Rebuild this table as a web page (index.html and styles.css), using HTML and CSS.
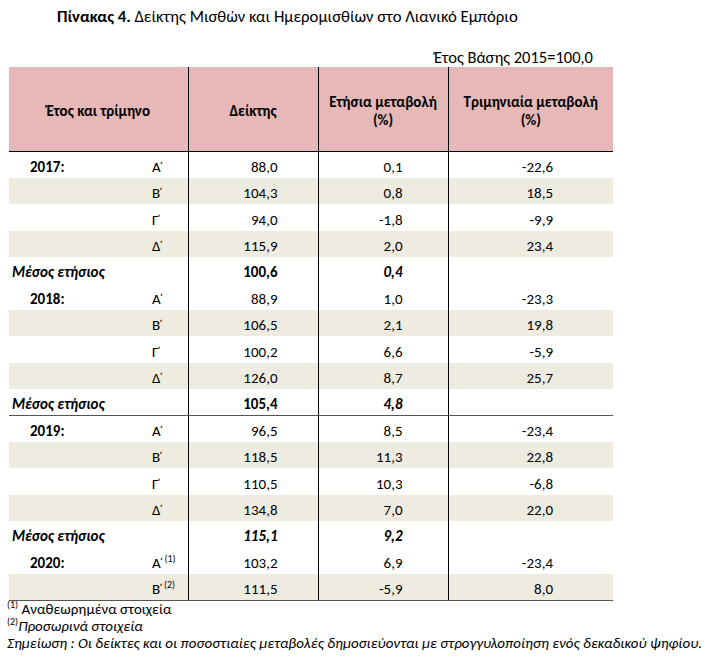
FILE: index.html
```html
<!DOCTYPE html>
<html lang="el">
<head>
    <meta charset="UTF-8">
    <title>Πίνακας 4</title>
    <link rel="stylesheet" href="styles.css">
</head>
<body>
    <div class="page">
        <div class="title"><b>Πίνακας 4.</b> Δείκτης Μισθών και Ημερομισθίων στο Λιανικό Εμπόριο</div>
        <div class="base">Έτος Βάσης 2015=100,0</div>
        <table class="data">
            <colgroup>
                <col class="w-year">
                <col class="w-q">
                <col class="w-num">
                <col class="w-num">
                <col class="w-last">
            </colgroup>
            <thead>
                <tr>
                    <th colspan="2">Έτος και τρίμηνο</th>
                    <th class="c2">Δείκτης</th>
                    <th class="c3">Ετήσια μεταβολή<br>(%)</th>
                    <th class="c4">Τριμηνιαία μεταβολή<br>(%)</th>
                </tr>
            </thead>
            <tbody>
                <tr><td class="year">2017:</td><td class="q">Α΄</td><td class="n2">88,0</td><td class="n3">0,1</td><td class="n4">-22,6</td></tr>
                <tr class="shade"><td class="year"></td><td class="q">Β΄</td><td class="n2">104,3</td><td class="n3">0,8</td><td class="n4">18,5</td></tr>
                <tr><td class="year"></td><td class="q">Γ΄</td><td class="n2">94,0</td><td class="n3">-1,8</td><td class="n4">-9,9</td></tr>
                <tr class="shade"><td class="year"></td><td class="q">Δ΄</td><td class="n2">115,9</td><td class="n3">2,0</td><td class="n4">23,4</td></tr>
                <tr class="avg"><td colspan="2" class="avg-label">Μέσος ετήσιος</td><td class="n2">100,6</td><td class="n3"><i>0,4</i></td><td class="n4"></td></tr>

                <tr><td class="year">2018:</td><td class="q">Α΄</td><td class="n2">88,9</td><td class="n3">1,0</td><td class="n4">-23,3</td></tr>
                <tr class="shade"><td class="year"></td><td class="q">Β΄</td><td class="n2">106,5</td><td class="n3">2,1</td><td class="n4">19,8</td></tr>
                <tr><td class="year"></td><td class="q">Γ΄</td><td class="n2">100,2</td><td class="n3">6,6</td><td class="n4">-5,9</td></tr>
                <tr class="shade"><td class="year"></td><td class="q">Δ΄</td><td class="n2">126,0</td><td class="n3">8,7</td><td class="n4">25,7</td></tr>
                <tr class="avg rule"><td colspan="2" class="avg-label">Μέσος ετήσιος</td><td class="n2">105,4</td><td class="n3"><i>4,8</i></td><td class="n4"></td></tr>

                <tr><td class="year">2019:</td><td class="q">Α΄</td><td class="n2">96,5</td><td class="n3">8,5</td><td class="n4">-23,4</td></tr>
                <tr class="shade"><td class="year"></td><td class="q">Β΄</td><td class="n2">118,5</td><td class="n3">11,3</td><td class="n4">22,8</td></tr>
                <tr><td class="year"></td><td class="q">Γ΄</td><td class="n2">110,5</td><td class="n3">10,3</td><td class="n4">-6,8</td></tr>
                <tr class="shade"><td class="year"></td><td class="q">Δ΄</td><td class="n2">134,8</td><td class="n3">7,0</td><td class="n4">22,0</td></tr>
                <tr class="avg"><td colspan="2" class="avg-label">Μέσος ετήσιος</td><td class="n2"><i>115,1</i></td><td class="n3"><i>9,2</i></td><td class="n4"></td></tr>

                <tr><td class="year">2020:</td><td class="q">Α΄<sup>(1)</sup></td><td class="n2">103,2</td><td class="n3">6,9</td><td class="n4">-23,4</td></tr>
                <tr class="shade rule"><td class="year"></td><td class="q">Β΄<sup>(2)</sup></td><td class="n2">111,5</td><td class="n3">-5,9</td><td class="n4">8,0</td></tr>
            </tbody>
        </table>
        <div class="notes">
            <div><sup>(1)</sup> Αναθεωρημένα στοιχεία</div>
            <div class="it"><sup>(2)</sup>Προσωρινά στοιχεία</div>
            <div class="it">Σημείωση : Οι δείκτες και οι ποσοστιαίες μεταβολές δημοσιεύονται με στρογγυλοποίηση ενός δεκαδικού ψηφίου.</div>
        </div>
    </div>
</body>
</html>
```

FILE: styles.css
```css
body {
    margin: 0;
    background: #fff;
    color: #000;
    font-family: 'Carlito', 'Liberation Sans Narrow', 'Liberation Sans', sans-serif;
}

.page {
    padding: 6px 0 0 9px;
    width: 604px;
}

.title {
    font-size: 16.7px;
    line-height: 20px;
    padding-left: 48px;
    white-space: nowrap;
}

.base {
    margin-top: 21px;
    font-size: 16.5px;
    line-height: 20px;
    text-align: right;
    padding-right: 20px;
}

.data {
    border-collapse: collapse;
    width: 604px;
    table-layout: fixed;
    font-size: 15px;
}

.w-year { width: 135px; }
.w-q { width: 44px; }
.w-num { width: 130px; }
.w-last { width: 165px; }

.data th {
    background: #e6b8b7;
    height: 80px;
    padding: 4px 0 0 0;
    font-weight: bold;
    line-height: 18px;
    text-align: center;
    vertical-align: middle;
    border-bottom: 1.5px solid #000;
}

.data th.c2,
.data th.c3,
.data th.c4,
.data td.n2,
.data td.n3,
.data td.n4 {
    border-left: 1px solid #000;
}

.data td {
    height: 26.4px;
    padding: 0 0 3px 0;
    box-sizing: border-box;
    vertical-align: bottom;
    line-height: 16px;
    white-space: nowrap;
}

.data td.year {
    padding-left: 21px;
    font-weight: bold;
}

/* keraia sits tight against the letter */
.data td.q {
    padding-left: 8px;
    letter-spacing: -2px;
}

.data td.n2 {
    text-align: right;
    padding-right: 40px;
}

.data td.n3 {
    text-align: right;
    padding-right: 45px;
}

.data td.n4 {
    text-align: right;
    padding-right: 60px;
}

.data sup {
    font-size: 10px;
    line-height: 0;
    vertical-align: 6px;
    margin-left: 3px;
    letter-spacing: 0;
}

.shade td {
    background: #eeece1;
}

.avg td {
    font-weight: bold;
}

.avg-label {
    font-style: italic;
    padding-left: 3px !important;
}

.rule td {
    border-bottom: 1.5px solid #555;
}

.notes {
    margin-left: -2px;
    font-size: 15px;
    line-height: 17px;
    white-space: nowrap;
}

.notes .it {
    font-style: italic;
}

.notes sup {
    font-size: 10px;
    line-height: 0;
    vertical-align: 6px;
    font-style: normal;
}
```
